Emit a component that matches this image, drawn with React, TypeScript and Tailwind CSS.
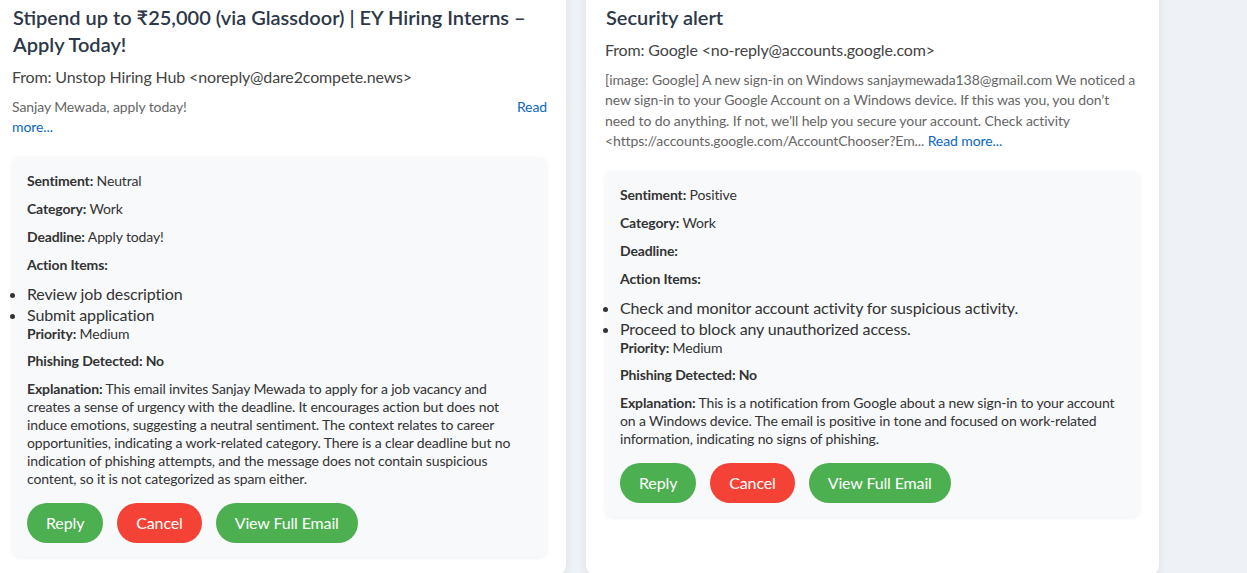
import React from "react";

// Email analysis cards — two side-by-side cards with summary + AI analysis box

type Analysis = {
  sentiment: string;
  category: string;
  deadline: string;
  actions: string[];
  priority: string;
  phishing: string;
  explanation: string;
};

type Email = {
  subject: string;
  from: string;
  snippet: React.ReactNode;
  analysis: Analysis;
};

const EMAILS: Email[] = [
  {
    subject: "Stipend up to ₹25,000 (via Glassdoor) | EY Hiring Interns – Apply Today!",
    from: "From: Unstop Hiring Hub <noreply@dare2compete.news>",
    snippet: (
      <>
        <span className="flex justify-between">
          <span>Sanjay Mewada, apply today!</span>
          <a className="text-[#0b66c3]">Read</a>
        </span>
        <a className="text-[#0b66c3]">more...</a>
      </>
    ),
    analysis: {
      sentiment: "Neutral",
      category: "Work",
      deadline: "Apply today!",
      actions: ["Review job description", "Submit application"],
      priority: "Medium",
      phishing: "No",
      explanation:
        "This email invites Sanjay Mewada to apply for a job vacancy and creates a sense of urgency with the deadline. It encourages action but does not induce emotions, suggesting a neutral sentiment. The context relates to career opportunities, indicating a work-related category. There is a clear deadline but no indication of phishing attempts, and the message does not contain suspicious content, so it is not categorized as spam either.",
    },
  },
  {
    subject: "Security alert",
    from: "From: Google <no-reply@accounts.google.com>",
    snippet: (
      <>
        [image: Google] A new sign-in on Windows sanjaymewada138@gmail.com We noticed a new sign-in to your Google
        Account on a Windows device. If this was you, you don’t need to do anything. If not, we’ll help you secure your
        account. Check activity &lt;https://accounts.google.com/AccountChooser?Em...{" "}
        <a className="text-[#0b66c3]">Read more...</a>
      </>
    ),
    analysis: {
      sentiment: "Positive",
      category: "Work",
      deadline: "",
      actions: ["Check and monitor account activity for suspicious activity.", "Proceed to block any unauthorized access."],
      priority: "Medium",
      phishing: "No",
      explanation:
        "This is a notification from Google about a new sign-in to your account on a Windows device. The email is positive in tone and focused on work-related information, indicating no signs of phishing.",
    },
  },
];

function AnalysisBox({ a }: { a: Analysis }) {
  return (
    <div className="mt-[19.5px] rounded-lg bg-[#f8f9fb] px-[15px] pt-[15px] pb-[14px] text-[14px] leading-[18px] text-[#333] shadow-[0_1px_4px_rgba(0,0,0,0.06)]">
      <p className="mb-[10px]"><b>Sentiment:</b> {a.sentiment}</p>
      <p className="mb-[10px]"><b>Category:</b> {a.category}</p>
      <p className="mb-[10px]"><b>Deadline:</b> {a.deadline}</p>
      <p className="mb-[9px]"><b>Action Items:</b></p>
      <ul className="list-disc text-[16px] leading-[21px]">
        {a.actions.map((item) => <li key={item}>{item}</li>)}
      </ul>
      <p className="mb-[9px]"><b>Priority:</b> {a.priority}</p>
      <p className="mb-[10px] font-bold">Phishing Detected: {a.phishing}</p>
      <p className="mb-[15px]"><b>Explanation:</b> {a.explanation}</p>
      <div className="flex gap-[14px] text-[16px] text-white">
        <button className="h-10 rounded-full bg-[#4caf50] px-[19px]">Reply</button>
        <button className="h-10 rounded-full bg-[#f44336] px-[19px]">Cancel</button>
        <button className="h-10 rounded-full bg-[#4caf50] px-[19px]">View Full Email</button>
      </div>
    </div>
  );
}

function EmailCard({ email }: { email: Email }) {
  return (
    <div className="rounded-xl bg-white px-[19px] pt-5 pb-5 shadow-[0_2px_8px_rgba(0,0,0,0.08)]">
      <h2 className="mb-2 pl-px text-[20px] font-semibold leading-[27px] tracking-normal text-[#2d3748]">{email.subject}</h2>
      <p className="mb-[10px] text-[16px] leading-[21px] text-[#444]">{email.from}</p>
      <div className="text-[14px] leading-[20.3px] tracking-[-0.1px] text-[#666]">{email.snippet}</div>
      <AnalysisBox a={email.analysis} />
    </div>
  );
}

export default function App() {
  return (
    <div
      className="h-[573px] w-[1247px] overflow-hidden bg-[#eef1f5] tracking-[-0.14px]"
      style={{ fontFamily: "Lato, 'Noto Sans', sans-serif" }}
    >
      <div className="-mt-4 -ml-[7px] grid grid-cols-[573px_573px] gap-5">
        {EMAILS.map((e) => <EmailCard key={e.subject} email={e} />)}
      </div>
    </div>
  );
}
